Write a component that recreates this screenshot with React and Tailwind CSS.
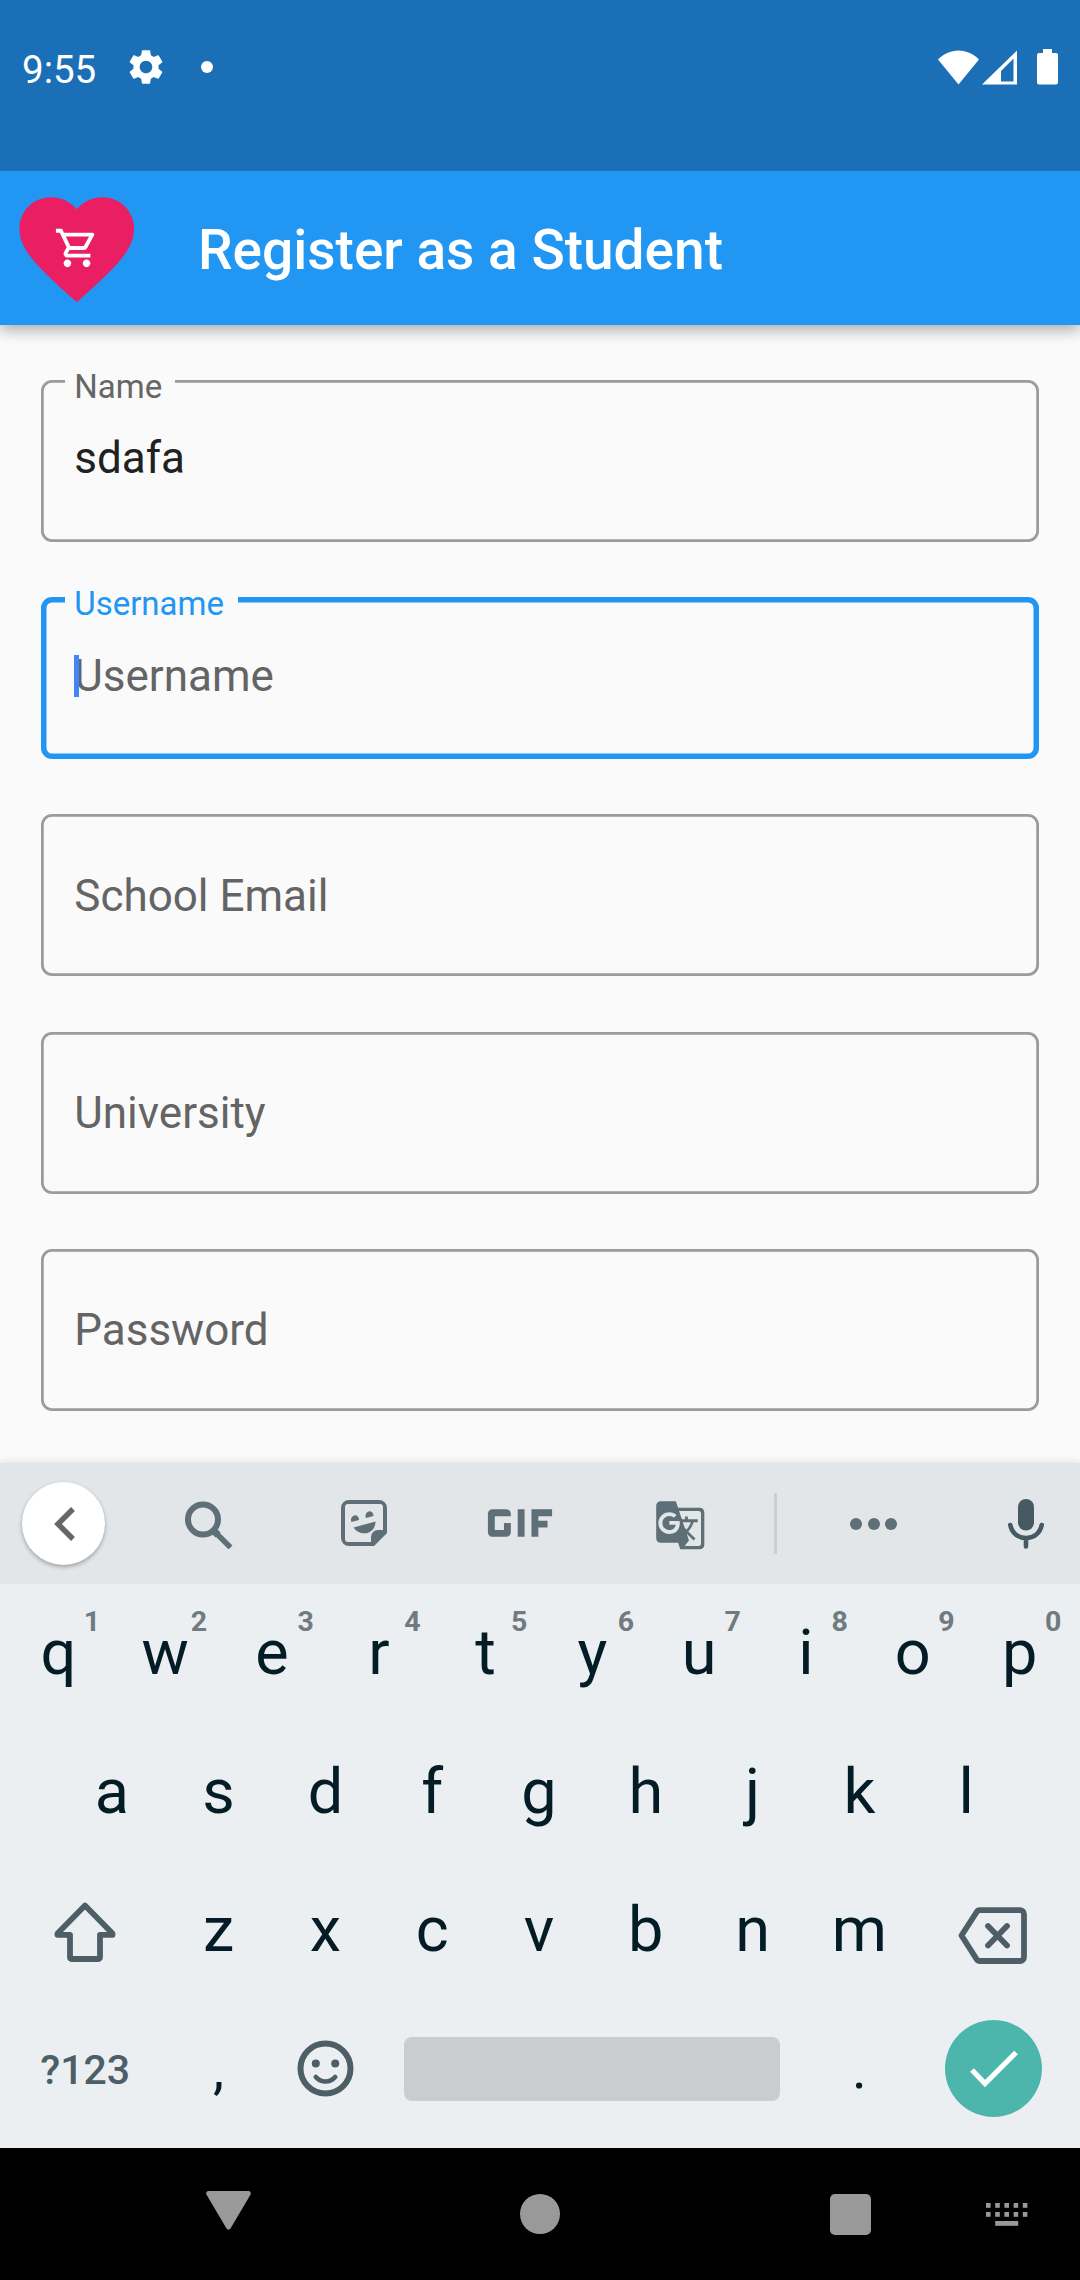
import React from "react";
import { MdSettings, MdFavorite, MdOutlineShoppingCart, MdGif, MdGTranslate } from "react-icons/md";

function StatusBar() {
  return (
    <div className="relative z-20 flex h-[171px] items-start bg-[#1a6fb7] text-white">
      <span className="ml-[22px] mt-[45px] w-[80px] text-[38.5px] leading-[50px]">9:55</span>
      <MdSettings className="ml-[23px] mt-[46px] size-[42px]" />
      <span className="ml-[34px] mt-[61px] size-[12px] rounded-full bg-white" />
      <svg className="ml-auto mt-[50px] h-[35px] w-[41px]" viewBox="0 0 41 35" fill="currentColor">
        <path d="M20.5 34.5 0 9.5C5.5 4 12.500 .5 20.500 .5S35.500 4 41 9.500Z" />
      </svg>
      <svg className="ml-[3px] mt-[50px] h-[35px] w-[35px]" viewBox="0 0 35 35" fill="currentColor" fillRule="evenodd">
        <path d="M35 .5V34.500H0ZM31.500 8.500 19 21V31.500H31.500Z" />
      </svg>
      <svg className="ml-[20px] mr-[22px] mt-[49px] h-[36px] w-[21px]" viewBox="0 0 21 36" fill="currentColor">
        <path d="M6 0h9v4h4a2 2 0 0 1 2 2v27.500a2 2 0 0 1-2 2H2a2 2 0 0 1-2-2V6a2 2 0 0 1 2-2h4Z" />
      </svg>
    </div>
  );
}

function AppBar() {
  return (
    <header className="relative z-10 flex h-[154px] bg-[#2196f3] text-white shadow-[0_5px_14px_rgba(0,0,0,0.32)]">
      <div className="relative ml-[8px] mt-[8.500px] size-[137.500px] shrink-0">
        <MdFavorite className="size-[137.500px] text-[#e91e63]" />
        <MdOutlineShoppingCart className="absolute left-[45.500px] top-[45.500px] size-[46px]" />
      </div>
      <h1 className="ml-[52.500px] mt-[39px] text-[55px] font-medium leading-[80px] whitespace-nowrap">Register as a Student</h1>
    </header>
  );
}

function Field({ label, value, focused }) {
  const floating = focused || value;
  return (
    <div
      className={
        "relative flex h-[162px] rounded-[11px] pl-[33px] text-[44px] leading-[52px] " +
        (focused ? "shadow-[inset_0_0_0_5.5px_#2196f3] " : "shadow-[inset_0_0_0_2.75px_#9b9b9b] ") +
        (floating ? (focused ? "items-start pt-[53px]" : "items-start pt-[52px]") : "items-center pt-[1px]")
      }
    >
      {floating && (
        <span
          className={
            "absolute left-[24px] top-[-13px] pl-[9px] text-[33px] leading-[40px] bg-[#fafafa] " +
            (focused ? "w-[173px] text-[#2196f3]" : "w-[110px] text-[#666]")
          }
        >
          {label}
        </span>
      )}
      {focused && <span className="absolute left-[33px] top-[58px] h-[42px] w-[5px] bg-[#4285f4]" />}
      <span className={value ? "text-[#212121]" : "text-[#646464]"}>{value || label}</span>
    </div>
  );
}

function Toolbar() {
  return (
    <div className="flex h-[121px] items-center bg-[#e2e6e9] text-[#5f6f77]">
      <div className="ml-[22px] flex size-[83px] items-center justify-center rounded-full bg-white text-[#666] shadow-[0_2px_4px_rgba(0,0,0,0.3)]">
        <svg className="size-[34px]" viewBox="0 0 34 34" fill="none" stroke="currentColor" strokeWidth="5.5">
          <path d="M26 2 11 17 26 32" />
        </svg>
      </div>
      <svg className="ml-[80px] mt-[2px] h-[48px] w-[48px]" viewBox="0 0 48 48" fill="none" stroke="currentColor">
        <circle cx="18" cy="18.500" r="15" strokeWidth="6" />
        <path d="M30 31 45.500 46.500" strokeWidth="5.500" />
        <path d="M28.500 29.500 33 34" strokeWidth="7" />
      </svg>
      <svg className="mb-[1px] ml-[108px] h-[46px] w-[46px]" viewBox="0 0 46 46" fill="currentColor">
        <path fillRule="evenodd" d="M8 0H38a8 8 0 0 1 8 8V33L33 46H8a8 8 0 0 1-8-8V8a8 8 0 0 1 8-8ZM7 4a3 3 0 0 0-3 3V39a3 3 0 0 0 3 3H30V37a7 7 0 0 1 7-7h5V7a3 3 0 0 0-3-3Z" />
        <path d="M10.500 22a4 4.500 0 1 1 7.500-2ZM25 18a4 4.500 0 1 1 7.500-2ZM12.500 27.500 34.500 21.500C34 36 18 36 12.500 27.500Z" />
      </svg>
      <MdGif className="mb-[2px] ml-[77.500px] size-[110px]" />
      <MdGTranslate className="ml-[79px] mt-[3px] size-[52.500px]" />
      <span className="ml-[68px] h-[61px] w-[3px] bg-[#cacfd2]" />
      <div className="ml-[73px] flex gap-[5.500px]">
        <span className="size-[12px] rounded-full bg-[#5f6f77]" />
        <span className="size-[12px] rounded-full bg-[#5f6f77]" />
        <span className="size-[12px] rounded-full bg-[#5f6f77]" />
      </div>
      <svg className="ml-[111px] h-[52px] w-[36px] text-[#475a63]" viewBox="0 0 36 52" fill="none" stroke="currentColor" strokeLinecap="round">
        <rect x="10" y="1" width="16" height="31.500" rx="8" fill="currentColor" stroke="none" />
        <path d="M2.300 27C4 35.500 10.500 40 18 40S32 35.500 33.700 27M18 40.500V48.500" strokeWidth="4.600" />
      </svg>
    </div>
  );
}

function Key({ char, hint }) {
  return (
    <div className="relative w-[106.8px] shrink-0 text-center">
      {char}
      {hint && (
        <span className="absolute left-[67px] top-[18px] w-[40px] text-center text-[28.5px] font-bold leading-[40px] text-[#6f7b81]">
          {hint}
        </span>
      )}
    </div>
  );
}

const TOP = ["q", "w", "e", "r", "t", "y", "u", "i", "o", "p"];

function Keyboard() {
  const row = "flex h-[138.5px] justify-center pr-[2px] text-[63px] leading-[138.5px] text-[#031c26]";
  return (
    <div className="relative z-10 h-[685px] bg-[#ebeff2] shadow-[0_0_8px_rgba(0,0,0,0.13)]">
      <Toolbar />
      <div className={row}>
        {TOP.map((c, i) => (
          <Key key={c} char={c} hint={String((i + 1) % 10)} />
        ))}
      </div>
      <div className={row}>
        {[..."asdfghjkl"].map((c) => (
          <Key key={c} char={c} />
        ))}
      </div>
      <div className={row + " items-center"}>
        <div className="flex w-[160px] justify-center text-[#4d5e66]">
          <svg className="mt-[2px] h-[62px] w-[62px]" viewBox="0 0 62 62" fill="none" stroke="currentColor" strokeWidth="5.800" strokeLinejoin="round">
            <path d="M31 5.500 58.500 33.500V34.800H46V57.500a1.500 1.500 0 0 1-1.500 1.500H17.500a1.500 1.500 0 0 1-1.500-1.500V34.800H3.500V33.500Z" />
          </svg>
        </div>
        {[..."zxcvbnm"].map((c) => (
          <Key key={c} char={c} />
        ))}
        <div className="flex w-[160px] justify-center text-[#4d5e66]">
          <svg className="mt-[10px] h-[57px] w-[70px]" viewBox="0 0 70 57" fill="none" stroke="currentColor" strokeWidth="5.800" strokeLinecap="round" strokeLinejoin="round">
            <path d="M22 3.200H62a4 4 0 0 1 4 4V50a4 4 0 0 1-4 4H22a4 4 0 0 1-3.500-2L3.500 28.500 18.500 5.200a4 4 0 0 1 3.500-2Z" />
            <path d="M30 19 49 38.500M49 19 30 38.500" />
          </svg>
        </div>
      </div>
      <div className={row + " items-center"}>
        <span className="w-[160px] pt-[2px] text-center text-[41px] font-medium leading-[138px] text-[#4d5e66]">?123</span>
        <span className="w-[106.8px] text-center text-[56px]">,</span>
        <div className="flex w-[106.8px] justify-center text-[#4d5e66]">
          <svg className="size-[57px]" viewBox="0 0 57 57" fill="none" stroke="currentColor" strokeLinecap="round">
            <circle cx="28.500" cy="28.500" r="25" strokeWidth="6" />
            <circle cx="18.800" cy="23.500" r="4" fill="currentColor" stroke="none" />
            <circle cx="38.200" cy="23.500" r="4" fill="currentColor" stroke="none" />
            <path d="M18.800 37C24 43 33 43 38.200 37" strokeWidth="4.600" />
          </svg>
        </div>
        <div className="flex w-[427.2px] justify-center">
          <div className="h-[64px] w-[376px] rounded-[8px] bg-[#c9cdd0]" />
        </div>
        <span className="w-[106.8px] text-center text-[56px]">.</span>
        <div className="flex w-[160px] justify-center pl-[2px]">
          <div className="flex size-[97px] items-center justify-center rounded-full bg-[#4db6ac] text-white">
            <svg className="h-[40px] w-[50px]" viewBox="0 0 50 40" fill="none" stroke="currentColor" strokeWidth="5.200">
              <path d="M3 21 16 34.500 47 3.500" />
            </svg>
          </div>
        </div>
      </div>
    </div>
  );
}

function NavBar() {
  return (
    <nav className="flex h-[132px] items-start bg-black text-[#999]">
      <svg className="ml-[206px] mt-[42px] h-[41px] w-[45px]" viewBox="0 0 45 41" fill="currentColor">
        <path d="M3 1H42a2.500 2.500 0 0 1 2.300 4L24.500 38.500a2.300 2.300 0 0 1-4 0L.700 5A2.500 2.500 0 0 1 3 1Z" />
      </svg>
      <span className="ml-[269px] mt-[46px] size-[40px] rounded-full bg-[#999]" />
      <span className="ml-[270px] mt-[46px] size-[41px] rounded-[5px] bg-[#999]" />
      <svg className="ml-[115px] mt-[55px] h-[23px] w-[42px]" viewBox="0 0 42 23" fill="currentColor">
        {[0, 1, 2, 3, 4].map((i) => (
          <g key={i}>
            <rect x={i * 9.2} y="0" width="4.600" height="4.800" />
            <rect x={i * 9.2} y="9" width="4.600" height="4.800" />
          </g>
        ))}
        <rect x="9.200" y="18" width="23" height="4.800" />
      </svg>
    </nav>
  );
}

export default function App() {
  return (
    <div className="flex h-[2280px] w-[1080px] flex-col overflow-hidden bg-[#fafafa] font-['Roboto',sans-serif]">
      <StatusBar />
      <AppBar />
      <main className="flex flex-1 flex-col gap-[55.200px] px-[41.250px] pt-[55px]">
        <Field label="Name" value="sdafa" />
        <Field label="Username" focused />
        <Field label="School Email" />
        <Field label="University" />
        <Field label="Password" />
      </main>
      <Keyboard />
      <NavBar />
    </div>
  );
}
